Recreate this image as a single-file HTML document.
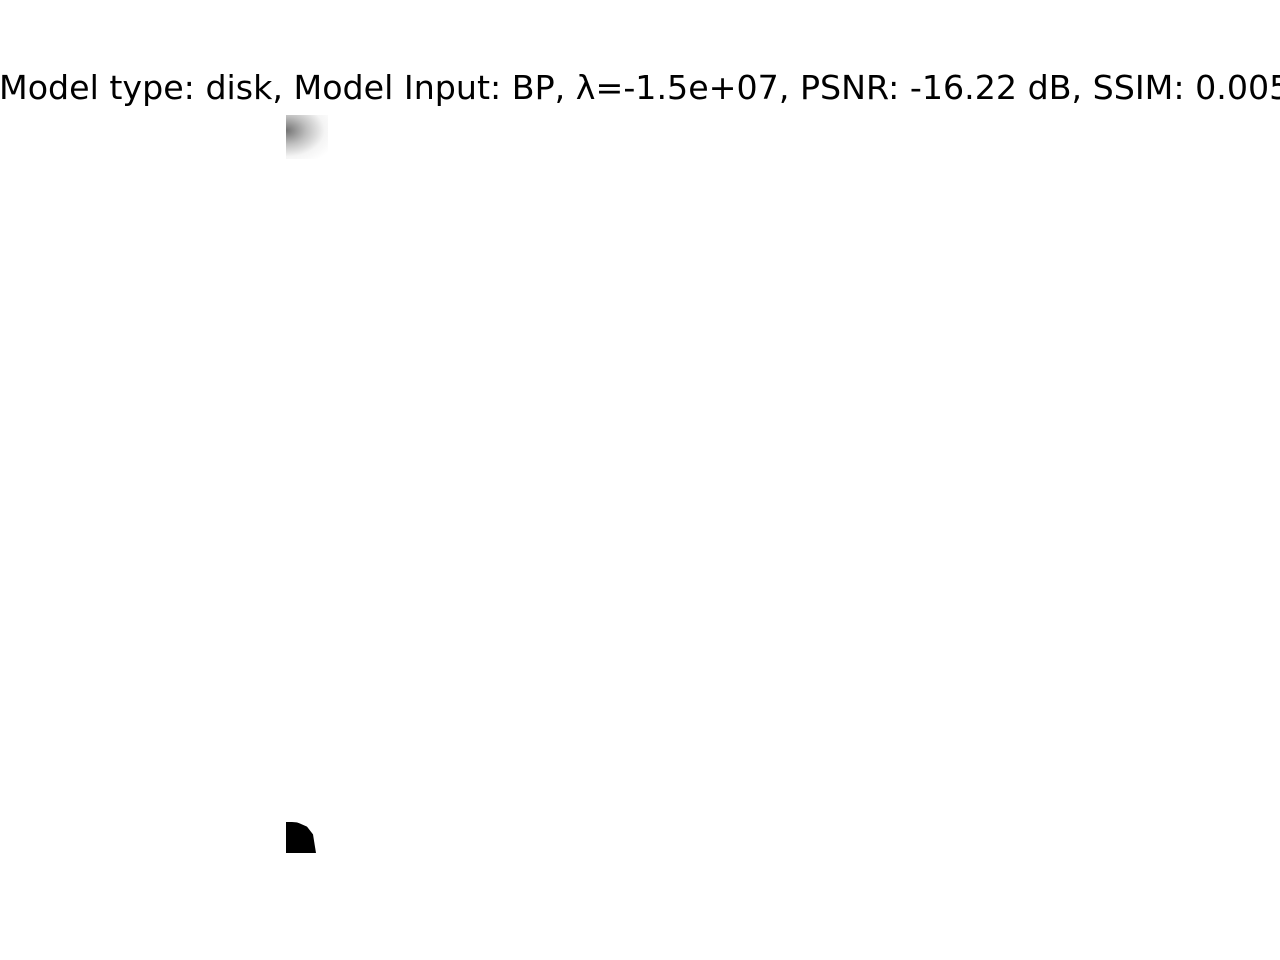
<!DOCTYPE html>
<html><head><style>
html,body{margin:0;padding:0;background:#fff;width:1280px;height:960px;overflow:hidden;position:relative}
.t{position:absolute;left:-1px;top:66px;white-space:nowrap;font-family:"DejaVu Sans","Liberation Sans",sans-serif;font-size:33.25px;color:#000;line-height:44px}
.g{position:absolute;left:286px;top:115px;width:42px;height:44px;background:radial-gradient(ellipse at 0% 35%,rgba(90,90,90,.85) 0%,rgba(150,150,150,.6) 35%,rgba(220,220,220,.3) 65%,rgba(255,255,255,0) 90%)}
.b{position:absolute;left:286px;top:822px;width:30px;height:31px;background:#000;border-top-right-radius:24px 20px;clip-path:polygon(0 0,35% 0,70% 15%,90% 40%,95% 70%,100% 100%,0 100%)}
</style></head><body>
<div class="t">Model type: disk, Model Input: BP, λ=-1.5e+07, PSNR: -16.22 dB, SSIM: 0.005</div>
<div class="g"></div>
<div class="b"></div>
</body></html>
